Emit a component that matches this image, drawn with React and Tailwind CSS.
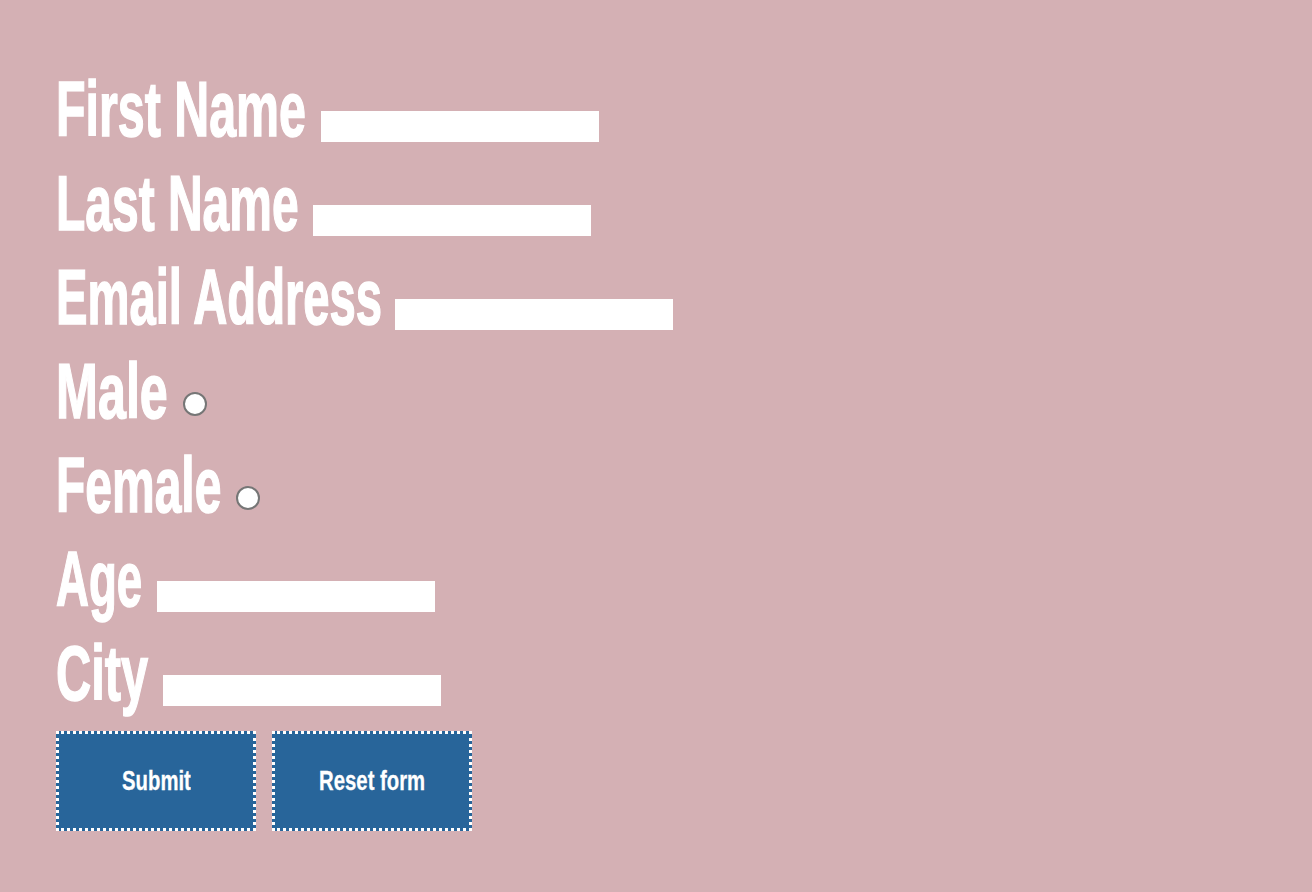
import React from "react";

const font = { fontFamily: "'Liberation Sans', Arial, sans-serif" };

function Label({ text, w, s }) {
  return (
    <span className={`block shrink-0 text-white font-bold text-[78px] leading-none whitespace-nowrap mb-[-6px] ${w}`} style={font}>
      <span className={`inline-block origin-left ${s} [-webkit-text-stroke:1.5px_white]`}>{text}</span>
    </span>
  );
}

function TextInput() {
  return <input type="text" className="ml-[17px] w-[278px] h-[31px] bg-white outline-none" />;
}

function Radio() {
  return (
    <input
      type="radio"
      name="gender"
      className="appearance-none ml-[17px] mb-[8px] w-6 h-6 rounded-full bg-white border-2 border-[#767676]"
    />
  );
}

export default function App() {
  return (
    <div className="min-h-[892px] w-full bg-[#d4b0b4] pl-[56px] pt-[48px]">
      <form onSubmit={(e) => e.preventDefault()}>
        <div className="flex items-end h-[94px]">
          <Label text="First Name" w="w-[248px]" s="scale-x-[0.62]" />
          <TextInput />
        </div>
        <div className="flex items-end h-[94px]">
          <Label text="Last Name" w="w-[240px]" s="scale-x-[0.615]" />
          <TextInput />
        </div>
        <div className="flex items-end h-[94px]">
          <Label text="Email Address" w="w-[322px]" s="scale-x-[0.605]" />
          <TextInput />
        </div>
        <div className="flex items-end h-[94px]">
          <Label text="Male" w="w-[110px]" s="scale-x-[0.645]" />
          <Radio />
        </div>
        <div className="flex items-end h-[94px]">
          <Label text="Female" w="w-[163px]" s="scale-x-[0.615]" />
          <Radio />
        </div>
        <div className="flex items-end h-[94px]">
          <Label text="Age" w="w-[84px]" s="scale-x-[0.585]" />
          <TextInput />
        </div>
        <div className="flex items-end h-[94px]">
          <Label text="City" w="w-[90px]" s="scale-x-[0.625]" />
          <TextInput />
        </div>
        <div className="flex gap-[16px] mt-[25px]">
          <button
            type="submit"
            className="w-[200px] h-[100px] bg-[#28659a] border-[3px] border-dotted border-white text-white flex items-center justify-center"
          >
            <span className="inline-block scale-x-[0.725] font-bold text-[28px] whitespace-nowrap [-webkit-text-stroke:0.3px_white]" style={font}>
              Submit
            </span>
          </button>
          <button
            type="reset"
            className="w-[200px] h-[100px] bg-[#28659a] border-[3px] border-dotted border-white text-white flex items-center justify-center"
          >
            <span className="inline-block scale-x-[0.725] font-bold text-[28px] whitespace-nowrap [-webkit-text-stroke:0.3px_white]" style={font}>
              Reset form
            </span>
          </button>
        </div>
      </form>
    </div>
  );
}
